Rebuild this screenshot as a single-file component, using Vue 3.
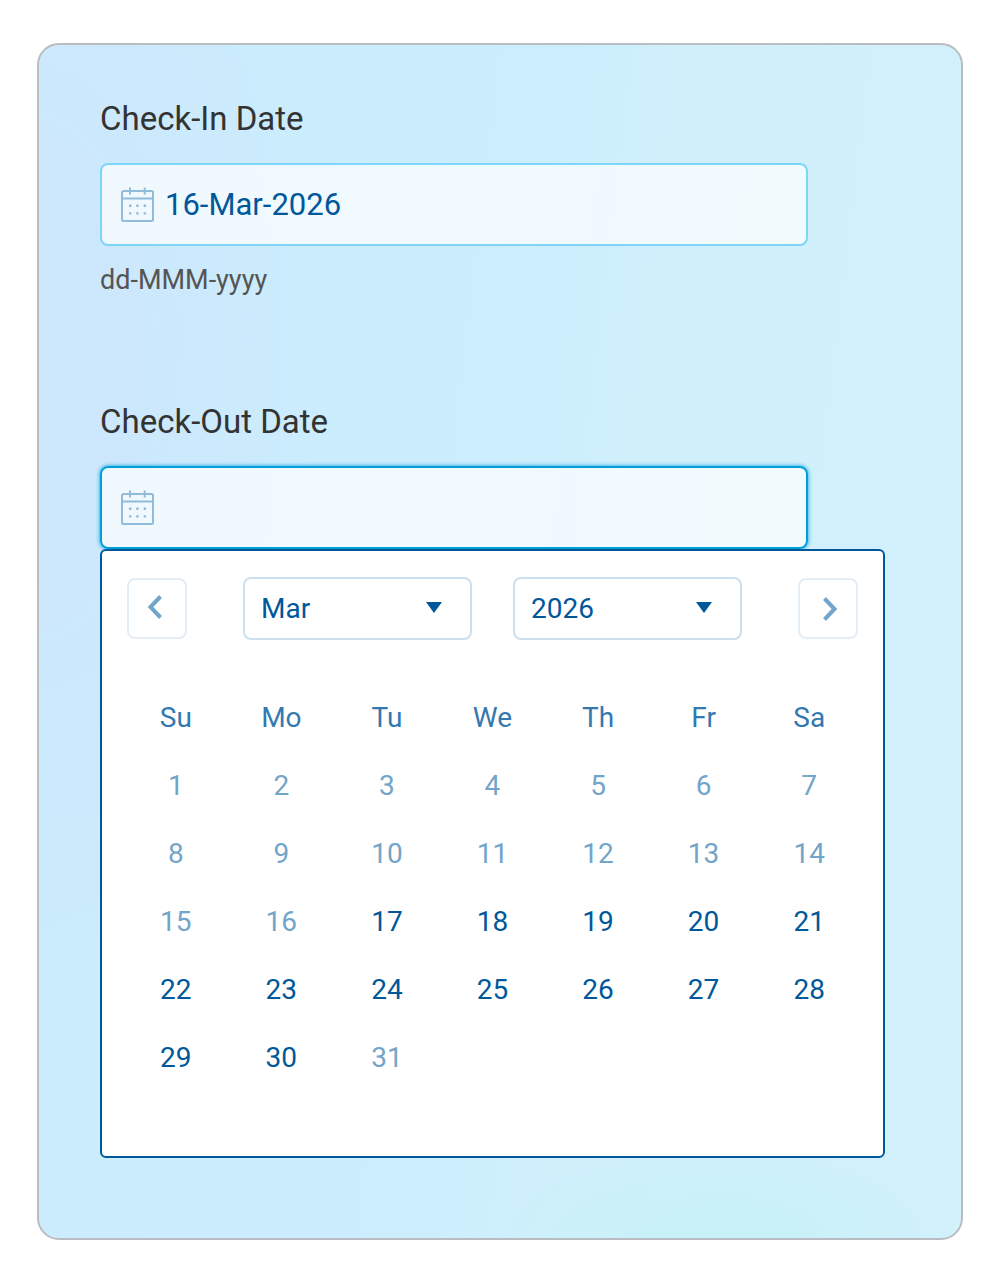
<template>
  <main class="booking-card">
    <div class="field">
      <label class="field-label" for="check-in">Check-In Date</label>
      <div class="input-wrap">
        <svg class="calendar-icon" viewBox="0 0 34 36" aria-hidden="true">
          <path d="M2.500 4h28A1.500 1.500 0 0 1 32 5.500v27a1.500 1.500 0 0 1-1.500 1.500h-28A1.500 1.500 0 0 1 1 32.500v-27A1.500 1.500 0 0 1 2.500 4ZM1 11.500h31M9 .5v7M23.700 .5v7" />
          <path class="dots" d="M8 17.500h2.400v2.400H8zM15.200 17.500h2.400v2.400h-2.400zM22.700 17.500h2.400v2.400h-2.400zM8 25.200h2.400v2.400H8zM15.200 25.200h2.400v2.400h-2.400zM22.700 25.200h2.400v2.400h-2.400z" />
        </svg>
        <input id="check-in" v-model="checkIn" class="date-input" type="text" aria-describedby="check-in-hint" />
      </div>
      <p id="check-in-hint" class="hint">dd-MMM-yyyy</p>
    </div>

    <div class="field">
      <label class="field-label" for="check-out">Check-Out Date</label>
      <div class="input-wrap">
        <svg class="calendar-icon" viewBox="0 0 34 36" aria-hidden="true">
          <path d="M2.500 4h28A1.500 1.500 0 0 1 32 5.500v27a1.500 1.500 0 0 1-1.500 1.500h-28A1.500 1.500 0 0 1 1 32.500v-27A1.500 1.500 0 0 1 2.500 4ZM1 11.500h31M9 .5v7M23.700 .5v7" />
          <path class="dots" d="M8 17.500h2.400v2.400H8zM15.200 17.500h2.400v2.400h-2.400zM22.700 17.500h2.400v2.400h-2.400zM8 25.200h2.400v2.400H8zM15.200 25.200h2.400v2.400h-2.400zM22.700 25.200h2.400v2.400h-2.400z" />
        </svg>
        <input id="check-out" v-model="checkOut" class="date-input active" type="text" />
      </div>

      <div class="datepicker">
        <div class="picker-nav">
          <button class="nav-btn" type="button" aria-label="Previous month">
            <svg viewBox="0 0 20 28" aria-hidden="true"><path d="M13.500 1.500 3.500 12 13.500 22.500" /></svg>
          </button>
          <div class="selects">
            <div class="select-wrap">
              <select v-model="month" aria-label="Month">
                <option v-for="name in months" :key="name">{{ name }}</option>
              </select>
              <svg class="caret" viewBox="0 0 16 11" aria-hidden="true"><path d="M0 0h16L8 11z" /></svg>
            </div>
            <div class="select-wrap">
              <select v-model="year" aria-label="Year">
                <option v-for="y in years" :key="y" :value="y">{{ y }}</option>
              </select>
              <svg class="caret" viewBox="0 0 16 11" aria-hidden="true"><path d="M0 0h16L8 11z" /></svg>
            </div>
          </div>
          <button class="nav-btn" type="button" aria-label="Next month">
            <svg viewBox="0 0 20 28" aria-hidden="true"><path d="M6.500 3.500 16.500 14 6.500 24.500" /></svg>
          </button>
        </div>

        <table class="days">
          <thead>
            <tr>
              <th v-for="day in weekdays" :key="day" scope="col">{{ day }}</th>
            </tr>
          </thead>
          <tbody>
            <tr v-for="week in 5" :key="week">
              <td v-for="day in 7" :key="day">
                <button
                  v-if="dateOf(week, day) <= 31"
                  class="day"
                  type="button"
                  :disabled="!isSelectable(dateOf(week, day))"
                  @click="pick(dateOf(week, day))"
                >{{ dateOf(week, day) }}</button>
              </td>
            </tr>
          </tbody>
        </table>
      </div>
    </div>
  </main>
</template>

<script setup>
import { ref } from 'vue';

const checkIn = ref('16-Mar-2026');
const checkOut = ref('');
const month = ref('Mar');
const year = ref(2026);

const months = ['Mar'];
const years = [2026];
const weekdays = ['Su', 'Mo', 'Tu', 'We', 'Th', 'Fr', 'Sa'];

// The month starts on a Sunday, so no leading blanks are needed
const dateOf = (week, day) => (week - 1) * 7 + day;
const isSelectable = (date) => date > 16 && date < 31;

const pick = (date) => {
  checkOut.value = `${date}-${month.value}-${year.value}`;
};
</script>

<style>
body {
  margin: 0;
  background: #fff;
}
</style>

<style scoped>
.booking-card {
  box-sizing: border-box;
  margin: 43px 37px;
  padding: 54px 61px 80px;
  border: 2px solid #b9bdc1;
  border-radius: 22px;
  background:
    radial-gradient(ellipse 26% 8% at 74% 100%, #c9f1f8 30%, rgba(201, 241, 248, 0) 100%),
    radial-gradient(ellipse 30% 50% at 0% 28%, #cde7fc 20%, rgba(205, 231, 252, 0) 100%),
    linear-gradient(97deg, #cbecfd 0%, #cbedfe 42%, #cfeffb 60%, #d2f1fb 100%);
  font-family: Roboto, sans-serif;
}

.field + .field {
  margin-top: 105px;
}

.field-label {
  display: block;
  font-size: 33px;
  line-height: 40px;
  color: #333;
}

.input-wrap {
  position: relative;
  max-width: 708px;
  margin-top: 24px;
}

.date-input {
  display: block;
  box-sizing: border-box;
  width: 100%;
  height: 83px;
  padding: 0 20px 0 63px;
  border: 2px solid #7dd5f8;
  border-radius: 8px;
  background: rgba(255, 255, 255, 0.7);
  font-family: inherit;
  font-size: 31px;
  color: #00589b;
  outline: none;
}

.date-input.active {
  border-color: #009fda;
  box-shadow: 0 0 4px #009fda;
}

.calendar-icon {
  position: absolute;
  top: 24px;
  left: 21px;
  width: 34px;
  height: 36px;
  fill: none;
  stroke: #8fbcdb;
  stroke-width: 2;
}

.calendar-icon .dots {
  fill: #8fbcdb;
  stroke: none;
}

.hint {
  margin: 17px 0 0;
  font-size: 27px;
  line-height: 34px;
  color: #555;
}

.datepicker {
  position: relative;
  box-sizing: border-box;
  max-width: 785px;
  padding: 26px 21px 65px;
  border: 2px solid #00589b;
  border-radius: 6px;
  background: #fff;
}

.picker-nav {
  display: flex;
  align-items: center;
  gap: 56px;
  padding: 0 4px;
}

.nav-btn {
  display: flex;
  align-items: center;
  justify-content: center;
  flex-shrink: 0;
  box-sizing: border-box;
  width: 60px;
  height: 61px;
  padding: 0;
  border: 2px solid #e2edf5;
  border-radius: 8px;
  background: #fff;
}

.nav-btn svg {
  width: 20px;
  height: 28px;
  fill: none;
  stroke: #73a5ca;
  stroke-width: 4;
}

.selects {
  display: flex;
  flex: 1;
  gap: 41px;
}

.select-wrap {
  position: relative;
  flex: 1;
}

.select-wrap select {
  display: block;
  box-sizing: border-box;
  width: 100%;
  height: 63px;
  padding: 0 16px;
  border: 2px solid #ccdfec;
  border-radius: 8px;
  background: #fff;
  appearance: none;
  font-family: inherit;
  font-size: 28px;
  color: #00589b;
}

.caret {
  position: absolute;
  top: 25px;
  right: 30px;
  width: 16px;
  height: 11px;
  fill: #00589b;
  pointer-events: none;
}

.days {
  width: 100%;
  margin-top: 43px;
  border-collapse: collapse;
  table-layout: fixed;
}

.days th,
.days td {
  height: 68px;
  padding: 0;
  text-align: center;
}

.days th {
  font-size: 28px;
  font-weight: 400;
  color: #3379af;
}

.day {
  display: block;
  width: 100%;
  height: 68px;
  padding: 0;
  border: 0;
  background: none;
  font-family: inherit;
  font-size: 28px;
  color: #00589b;
}

.day:disabled {
  color: #73a5ca;
}
</style>
